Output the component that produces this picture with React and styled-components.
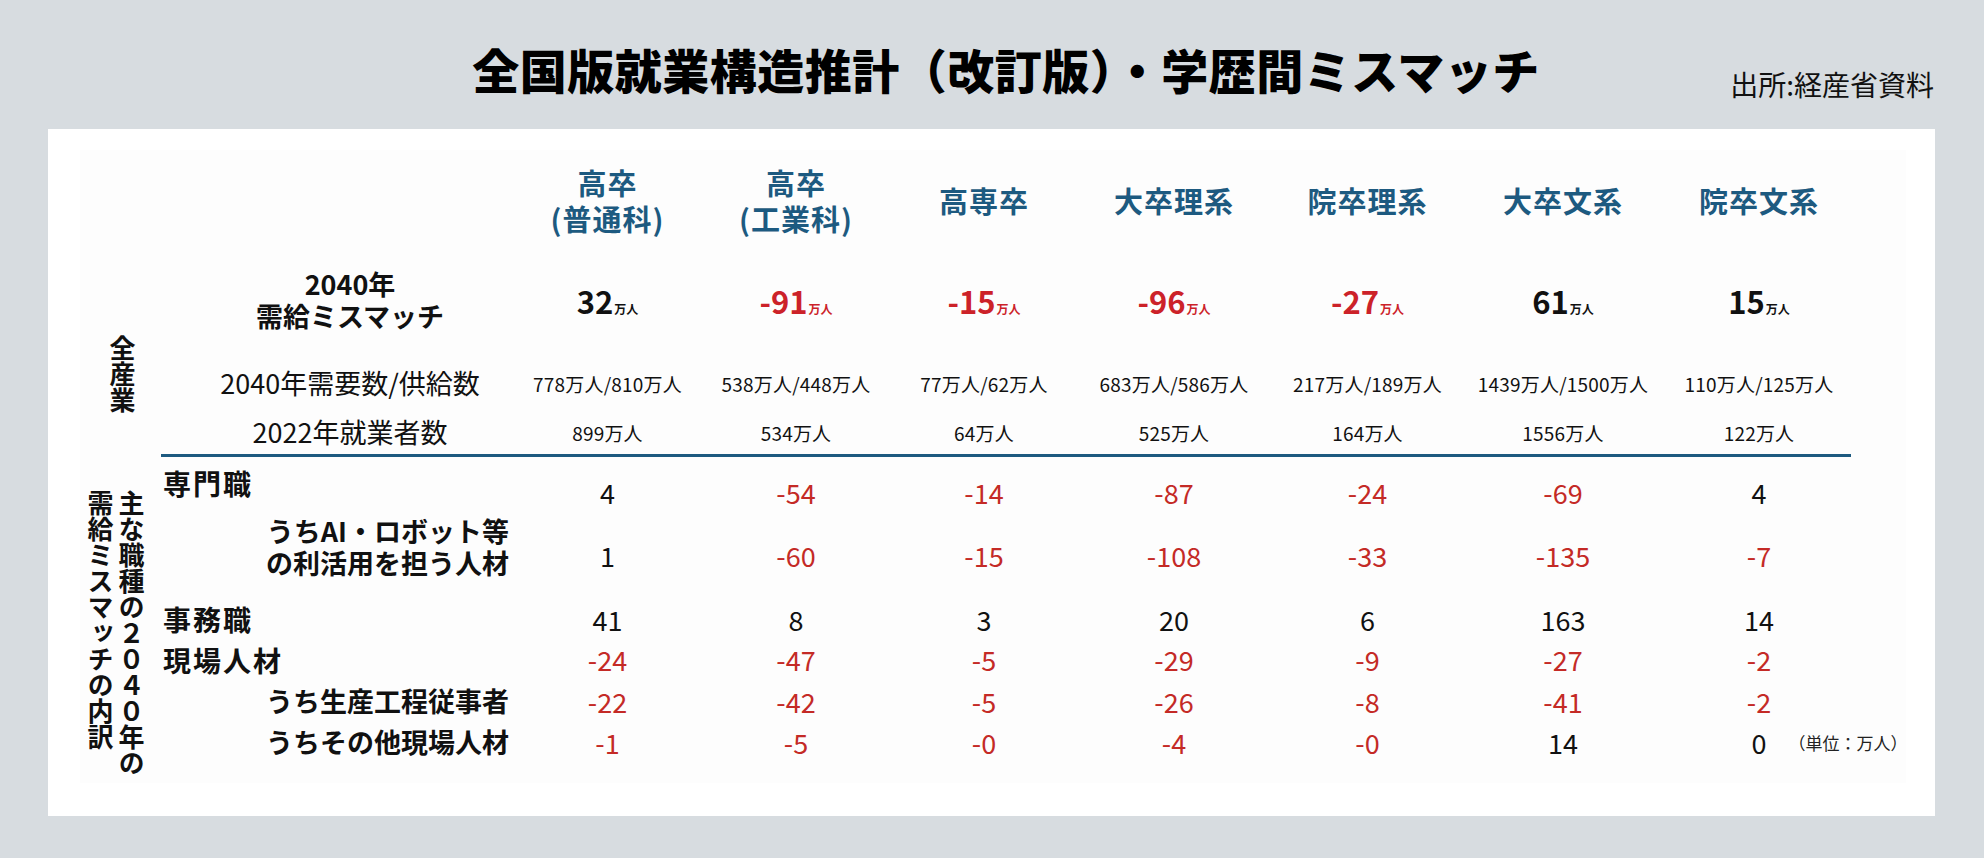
import React from "react";
import styled, { createGlobalStyle } from "styled-components";

const GlobalStyle = createGlobalStyle`
  html, body {
    margin: 0;
    padding: 0;
    background: #d7dce0;
  }
  body {
    font-family: "Noto Sans CJK JP", "Noto Sans", sans-serif;
    color: #111;
  }
`;

const COLUMNS = [
  { head: ["高卒", "(普通科)"], mis: "32", dem: "778万人/810万人", emp: "899万人", v: ["4", "1", "41", "-24", "-22", "-1"] },
  { head: ["高卒", "(工業科)"], mis: "-91", dem: "538万人/448万人", emp: "534万人", v: ["-54", "-60", "8", "-47", "-42", "-5"] },
  { head: ["高専卒"], mis: "-15", dem: "77万人/62万人", emp: "64万人", v: ["-14", "-15", "3", "-5", "-5", "-0"] },
  { head: ["大卒理系"], mis: "-96", dem: "683万人/586万人", emp: "525万人", v: ["-87", "-108", "20", "-29", "-26", "-4"] },
  { head: ["院卒理系"], mis: "-27", dem: "217万人/189万人", emp: "164万人", v: ["-24", "-33", "6", "-9", "-8", "-0"] },
  { head: ["大卒文系"], mis: "61", dem: "1439万人/1500万人", emp: "1556万人", v: ["-69", "-135", "163", "-27", "-41", "14"] },
  { head: ["院卒文系"], mis: "15", dem: "110万人/125万人", emp: "122万人", v: ["4", "-7", "14", "-2", "-2", "0"] },
];

// 下段の行（職種別）
const JOB_ROWS = [
  { label: ["専門職"], kind: "head", h: 70, shift: 18 },
  { label: ["うちAI・ロボット等", "の利活用を担う人材"], kind: "sub", h: 56, shift: 16, mb: 16 },
  { label: ["事務職"], kind: "head", h: 40 },
  { label: ["現場人材"], kind: "head", h: 41 },
  { label: ["うち生産工程従事者"], kind: "sub", h: 42 },
  { label: ["うちその他現場人材"], kind: "sub", h: 40 },
];

const isNeg = (s) => s.startsWith("-");

function App() {
  return (
    <>
      <GlobalStyle />
      <Page>
        <TopBar>
          <span />
          <Title>全国版就業構造推計（改訂版）・学歴間ミスマッチ</Title>
          <Source>出所:経産省資料</Source>
        </TopBar>
        <Panel>
          <Sheet>
            <Section>
              <SideCell $pt={185}>
                <Vertical>全産業</Vertical>
              </SideCell>
              <Rows>
                <Row $h={100}>
                  <span />
                  {COLUMNS.map((c, i) => (
                    <ColHead key={i}>
                      {c.head.map((t, j) => (
                        <div key={j}>{t}</div>
                      ))}
                    </ColHead>
                  ))}
                </Row>
                <Row $h={100}>
                  <TopLabel $bold>
                    <div>2040年</div>
                    <div>需給ミスマッチ</div>
                  </TopLabel>
                  {COLUMNS.map((c, i) => (
                    <Mismatch key={i} $neg={isNeg(c.mis)}>
                      {c.mis}
                      <Unit>万人</Unit>
                    </Mismatch>
                  ))}
                </Row>
                <Row $h={66}>
                  <TopLabel>2040年需要数/供給数</TopLabel>
                  {COLUMNS.map((c, i) => (
                    <SmallVal key={i}>{c.dem}</SmallVal>
                  ))}
                </Row>
                <Row $h={32}>
                  <TopLabel>2022年就業者数</TopLabel>
                  {COLUMNS.map((c, i) => (
                    <SmallVal key={i}>{c.emp}</SmallVal>
                  ))}
                </Row>
              </Rows>
            </Section>
            <Divider />
            <Section>
              <SideCell $pt={33}>
                <Vertical $multi>
                  主な職種の２０４０年の
                  <br />
                  需給ミスマッチの内訳
                </Vertical>
              </SideCell>
              <Rows>
                {JOB_ROWS.map((r, ri) => (
                  <Row key={ri} $h={r.h} $mb={r.mb}>
                    <JobLabel $kind={r.kind} $shift={r.shift}>
                      {r.label.map((t, j) => (
                        <div key={j}>{t}</div>
                      ))}
                    </JobLabel>
                    {COLUMNS.map((c, i) => {
                      const val = c.v[ri];
                      const last = ri === JOB_ROWS.length - 1 && i === COLUMNS.length - 1;
                      if (last) {
                        return (
                          <NoteCell key={i}>
                            <span />
                            <Num $neg={isNeg(val)}>{val}</Num>
                            <Note>（単位：万人）</Note>
                          </NoteCell>
                        );
                      }
                      return (
                        <Num key={i} $neg={isNeg(val)}>
                          {val}
                        </Num>
                      );
                    })}
                  </Row>
                ))}
              </Rows>
            </Section>
          </Sheet>
        </Panel>
      </Page>
    </>
  );
}

export default App;

const Page = styled.div`
  width: 1984px;
  height: 858px;
  background: #d7dce0;
  overflow: hidden;
`;

const TopBar = styled.div`
  height: 129px;
  display: grid;
  grid-template-columns: 1fr auto 1fr;
  padding-right: 50px;
  box-sizing: border-box;
`;

const Title = styled.h1`
  margin: 45px 0 0 78px;
  align-self: start;
  font-size: 47px;
  line-height: 1;
  letter-spacing: 0.5px;
  font-weight: 900;
  color: #000;
  white-space: nowrap;
`;

const Source = styled.div`
  justify-self: end;
  align-self: end;
  margin-bottom: 31px;
  font-size: 28px;
  line-height: 1;
  color: #111;
  white-space: nowrap;
`;

const Panel = styled.div`
  margin: 0 49px 0 48px;
  height: 687px;
  background: #fff;
  padding: 21px 0 0 32px;
  box-sizing: border-box;
`;

const Sheet = styled.div`
  width: 1826px;
  height: 633px;
  background: #fdfdfd;
`;

const Section = styled.div`
  display: flex;
`;

const SideCell = styled.div`
  width: 80px;
  flex: none;
  display: flex;
  justify-content: flex-start;
  padding-top: ${(p) => p.$pt}px;
  box-sizing: border-box;
`;

const Vertical = styled.div`
  writing-mode: vertical-rl;
  text-orientation: upright;
  font-size: 26px;
  font-weight: 700;
  line-height: 31px;
  color: #111;
  margin-left: ${(p) => (p.$multi ? 5 : 27)}px;
`;

const Rows = styled.div`
  display: flex;
  flex-direction: column;
`;

const Row = styled.div`
  display: grid;
  grid-template-columns: 353px 189px 188px 188px 192px 195px 196px 196px;
  grid-template-rows: ${(p) => p.$h}px;
  height: ${(p) => p.$h}px;
  margin-bottom: ${(p) => p.$mb || 0}px;
  align-items: center;
`;

const ColHead = styled.div`
  text-align: center;
  font-size: 29px;
  font-weight: 700;
  line-height: 36px;
  letter-spacing: 1px;
  color: #1d5a80;
`;

const TopLabel = styled.div`
  padding-left: 27px;
  text-align: center;
  font-size: 27px;
  font-weight: ${(p) => (p.$bold ? 700 : 400)};
  line-height: 32px;
  color: #111;
  white-space: nowrap;
`;

const Mismatch = styled.div`
  text-align: center;
  font-size: 31px;
  font-weight: 700;
  color: ${(p) => (p.$neg ? "#cc2229" : "#111")};
  white-space: nowrap;
`;

const Unit = styled.span`
  font-size: 12px;
  font-weight: 700;
  margin-left: 1px;
`;

const SmallVal = styled.div`
  text-align: center;
  font-size: 19px;
  letter-spacing: 0.2px;
  color: #111;
  white-space: nowrap;
`;

const Divider = styled.div`
  margin: 6px 0 0 81px;
  width: 1690px;
  height: 3px;
  background: #1d5a80;
`;

const JobLabel = styled.div`
  font-size: ${(p) => (p.$kind === "head" ? 28 : 27)}px;
  letter-spacing: ${(p) => (p.$kind === "head" ? 2 : 0)}px;
  font-weight: 700;
  line-height: 32px;
  text-align: ${(p) => (p.$kind === "head" ? "left" : "right")};
  padding: 0 4px ${(p) => p.$shift || 0}px 3px;
  color: #111;
  white-space: nowrap;
`;

const Num = styled.div`
  text-align: center;
  font-size: 27px;
  color: ${(p) => (p.$neg ? "#c42a26" : "#111")};
  white-space: nowrap;
`;

const NoteCell = styled.div`
  display: grid;
  grid-template-columns: minmax(0, 1fr) auto minmax(0, 1fr);
  align-items: center;
`;

const Note = styled.span`
  margin-left: 22px;
  font-size: 17px;
  color: #222;
  white-space: nowrap;
`;
